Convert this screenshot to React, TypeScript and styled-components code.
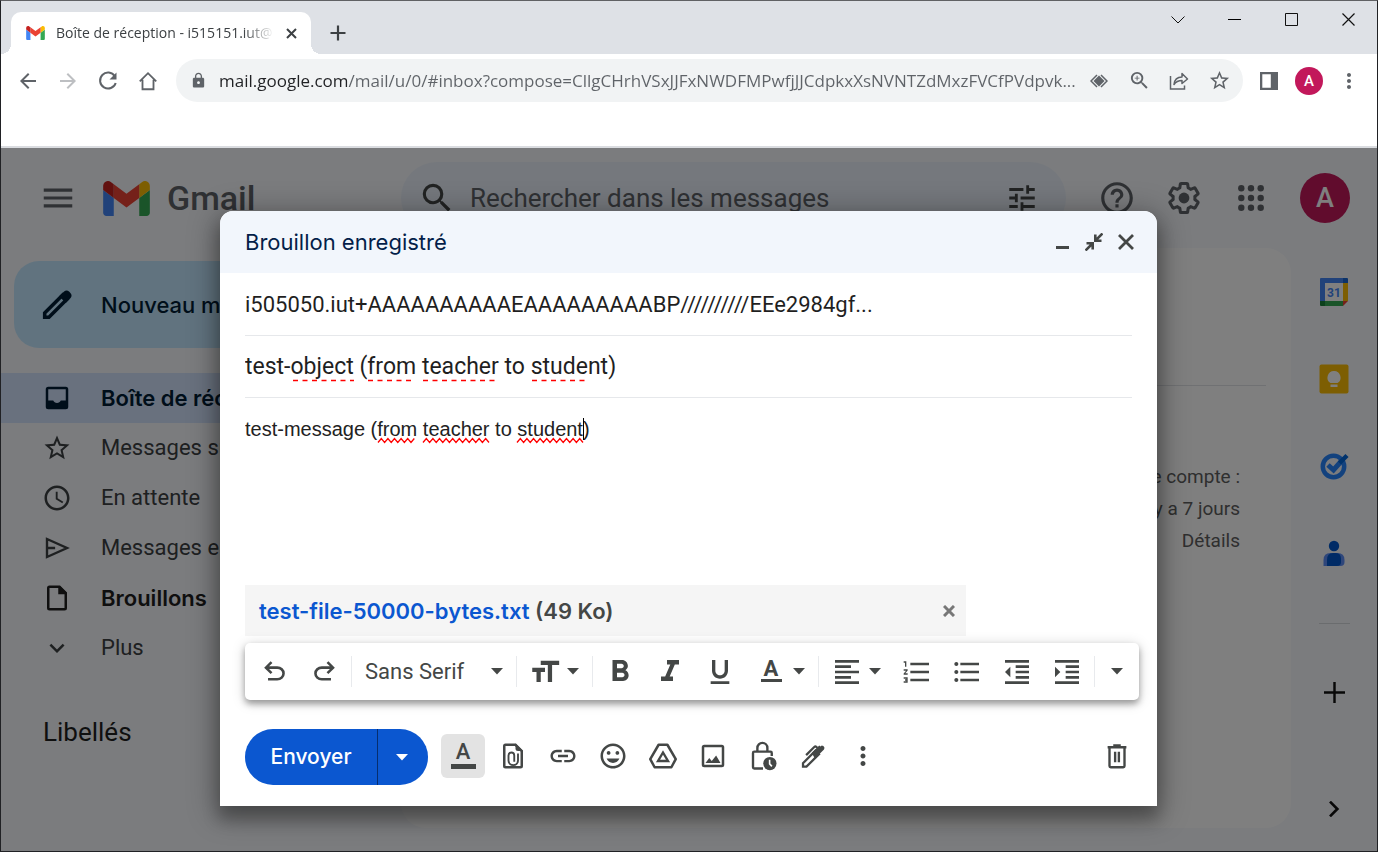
import React from 'react';
import styled, { createGlobalStyle } from 'styled-components';
import {
  MdMenu, MdSearch, MdTune, MdHelpOutline, MdStarBorder, MdSchedule, MdExpandMore,
  MdFormatBold, MdFormatItalic, MdFormatUnderlined, MdFormatAlignLeft, MdFormatListNumbered,
  MdFormatListBulleted, MdFormatIndentDecrease, MdFormatIndentIncrease, MdFormatSize, MdLink,
  MdOutlineInsertEmoticon, MdMoreVert, MdLock, MdArrowBack, MdArrowForward, MdOutlineZoomIn,
} from 'react-icons/md';

const sans = '"Roboto", "Liberation Sans", sans-serif';
const display = '"Inter", "Roboto", sans-serif';
const ui = '"Open Sans", "Noto Sans", sans-serif';

const GlobalStyle = createGlobalStyle`
  *, *::before, *::after { box-sizing: border-box; }
  body { margin: 0; font-family: ${sans}; }
  button, input, textarea, select { font: inherit; color: inherit; margin: 0; padding: 0; border: 0; background: none; outline: none; }
  button { cursor: pointer; }
  svg { display: block; flex: none; }
`;

const Window = styled.div`
  display: flex;
  flex-direction: column;
  min-height: 100vh;
  border: 1px solid #202124;
  border-top-color: #606164;
  background: #fff;
`;

/* ---------- browser chrome ---------- */
const TabStrip = styled.div`
  display: flex;
  align-items: flex-end;
  height: 53px;
  padding-left: 10px;
  background: #dee1e6;
`;
const Tab = styled.div`
  position: relative;
  display: flex;
  align-items: center;
  width: 300px;
  height: 42px;
  padding: 0 11px 0 15px;
  background: #fff;
  border-radius: 10px 10px 0 0;
  font: 14px/20px ${ui};
  color: #3c4043;
  &::before, &::after {
    content: '';
    position: absolute;
    bottom: 0;
    width: 10px;
    height: 10px;
  }
  &::before { right: 100%; background: radial-gradient(circle at 0 0, transparent 10px, #fff 10px); }
  &::after { left: 100%; background: radial-gradient(circle at 100% 0, transparent 10px, #fff 10px); }
`;
const TabTitle = styled.span`
  flex: 1;
  margin: 0 8px 0 11px;
  white-space: nowrap;
  mask-image: linear-gradient(to right, #000 86%, transparent 100%);
`;
const SmallButton = styled.button`
  display: grid;
  place-items: center;
  flex: none;
  width: 18px;
  height: 20px;
  color: #3c4043;
`;
const NewTab = styled.button`
  display: grid;
  place-items: center;
  width: 40px;
  height: 42px;
  margin-left: 7px;
  color: #3c4043;
`;
const WindowButtons = styled.div`
  display: flex;
  align-self: flex-start;
  margin-left: auto;
`;
const WindowButton = styled.button`
  display: grid;
  place-items: center;
  width: 57px;
  height: 37px;
  color: #111;
`;
const Toolbar = styled.div`
  display: flex;
  align-items: center;
  height: 53px;
  padding: 0 8px 0 7px;
`;
const ToolButton = styled.button<{ $dim?: boolean }>`
  display: grid;
  place-items: center;
  flex: none;
  width: 40px;
  height: 40px;
  color: ${p => (p.$dim ? '#bdbfc2' : '#5f6368')};
`;
const Omnibox = styled.div`
  display: flex;
  align-items: center;
  flex: 1;
  min-width: 0;
  height: 43px;
  margin: 0 6px 0 8px;
  padding: 0 4px 0 14px;
  border-radius: 22px;
  background: #f1f3f4;
  color: #5f6368;
`;
const Address = styled.input`
  flex: 1;
  min-width: 0;
  height: 30px;
  margin-left: 12px;
  font: 17px/30px ${ui};
  color: #5f6368;
  background: linear-gradient(to right, #202124 128px, #5f6368 128px);
  background-clip: text;
  -webkit-background-clip: text;
  -webkit-text-fill-color: transparent;
`;
const Avatar = styled.span<{ $size: number; $font: number }>`
  display: grid;
  place-items: center;
  width: ${p => p.$size}px;
  height: ${p => p.$size}px;
  border-radius: 50%;
  background: #c2185b;
  color: #fff;
  font-size: ${p => p.$font}px;
  font-weight: 500;
`;
const BookmarksBar = styled.div`
  height: 41px;
  border-bottom: 2px solid #dadce0;
`;

/* ---------- mail page ---------- */
const Page = styled.div`
  position: relative;
  display: flex;
  flex: 1;
  flex-direction: column;
  background: #f6f8fc;
  color: #444746;
`;
const Header = styled.header`
  display: flex;
  align-items: center;
  height: 100px;
`;
const Brand = styled.div`
  display: flex;
  align-items: center;
  width: 400px;
  padding-left: 38px;
`;
const BrandLink = styled.a`
  display: flex;
  align-items: center;
  gap: 17px;
  margin-left: 26px;
  font: 500 34px/40px ${sans};
  color: #5f6368;
  text-decoration: none;
`;
const HeaderIcon = styled.button<{ $w: number }>`
  display: grid;
  place-items: center;
  width: ${p => p.$w}px;
  height: 60px;
  color: #5f6368;
`;
const SearchBox = styled.div`
  display: flex;
  align-items: center;
  flex: 1;
  height: 72px;
  padding: 0 27px 0 17px;
  border-radius: 36px;
  background: #eaf1fb;
`;
const SearchInput = styled.input`
  flex: 1;
  min-width: 0;
  margin-left: 14px;
  font-size: 26px;
  line-height: 36px;
  &::placeholder { color: #5f6368; opacity: 1; }
`;
const HeaderTools = styled.div`
  display: flex;
  align-items: center;
  width: 311px;
  padding-left: 17px;
`;
const Account = styled.button`
  margin-left: 16px;
`;
const Columns = styled.div`
  display: flex;
  flex: 1;
`;
const Sidebar = styled.nav`
  width: 400px;
  padding-top: 13px;
  font-size: 22px;
  line-height: 28px;
`;
const ComposeButton = styled.button`
  display: flex;
  align-items: center;
  width: 300px;
  height: 87px;
  margin: 0 0 25px 13px;
  padding-left: 26px;
  gap: 27px;
  border-radius: 25px;
  background: #c2e7ff;
  color: #001d35;
  font: 500 22px/28px ${display};
`;
const NavItem = styled.a<{ $active?: boolean; $strong?: boolean }>`
  display: flex;
  align-items: center;
  height: 50px;
  width: 375px;
  padding-left: 41px;
  gap: 29px;
  border-radius: 0 25px 25px 0;
  text-decoration: none;
  background: ${p => (p.$active ? '#d3e3fd' : 'transparent')};
  color: ${p => (p.$active ? '#001d35' : p.$strong ? '#1f1f1f' : '#3c4043')};
  font: ${p => (p.$active || p.$strong ? `600 22px/28px ${display}` : `22px/28px ${sans}`)};
`;
const Labels = styled.h2`
  margin: 42px 0 0 42px;
  font: 26px/34px ${sans};
  color: #1f1f1f;
`;
const Panel = styled.main`
  flex: 1;
  margin-bottom: 23px;
  padding: 137px 25px 0;
  border-radius: 25px;
  background: #fff;
`;
const Activity = styled.footer`
  padding: 75px 26px 0 0;
  border-top: 1px solid #e0e2e6;
  text-align: right;
  font-size: 19px;
  line-height: 32px;
  color: #5e5e5e;
`;
const Line = styled.div``;
const Rail = styled.aside`
  display: flex;
  flex-direction: column;
  align-items: center;
  width: 86px;
  padding-bottom: 22px;
  color: #111;
`;
const RailButton = styled.button`
  display: grid;
  place-items: center;
  width: 61px;
  height: 87px;
`;
const RailRule = styled.hr`
  width: 31px;
  height: 1px;
  margin: 27px 0 25px;
  border: 0;
  background: #d5d8dd;
`;
const RailEnd = styled(RailButton)`
  height: 40px;
  margin-top: auto;
`;

/* ---------- compose dialog ---------- */
const Scrim = styled.div`
  position: absolute;
  inset: 0;
  display: flex;
  padding: 63px 220px 45px 219px;
  background: rgba(0, 0, 0, 0.5);
`;
const Dialog = styled.section`
  display: flex;
  flex: 1;
  flex-direction: column;
  min-width: 0;
  border-radius: 13px 13px 0 0;
  background: #fff;
  color: #444746;
  font-size: 22px;
  line-height: 28px;
  box-shadow: 0 12px 16px 2px rgba(0, 0, 0, 0.24), 0 5px 30px 4px rgba(0, 0, 0, 0.3);
`;
const DialogHeader = styled.header`
  display: flex;
  align-items: center;
  height: 62px;
  padding: 0 15px 0 25px;
  border-radius: 13px 13px 0 0;
  background: #f2f6fc;
`;
const DialogTitle = styled.h1`
  flex: 1;
  margin: 0;
  font: 400 22px/28px ${display};
  color: #041e49;
`;
const HeaderButton = styled.button`
  display: grid;
  place-items: center;
  width: 32px;
  height: 32px;
`;
const Fields = styled.div`
  display: flex;
  flex: 1;
  flex-direction: column;
  padding: 1px 25px 0;
  color: #1f1f1f;
`;
const Field = styled.label`
  position: relative;
  display: block;
  height: 62px;
  border-bottom: 1px solid #e6e8eb;
`;
const FieldInput = styled.input<{ $large?: boolean }>`
  width: 100%;
  height: 61px;
  font-size: ${p => (p.$large ? 23 : 22)}px;
`;
const MessageField = styled.label`
  position: relative;
  display: flex;
  flex: 1;
`;
const MessageInput = styled.textarea`
  flex: 1;
  padding-top: 18px;
  resize: none;
  font: 20px/26px "Liberation Sans", sans-serif;
  color: #222;
`;
const Marks = styled.svg`
  position: absolute;
  left: 0;
  top: 0;
  pointer-events: none;
`;
const Attachment = styled.div`
  display: flex;
  align-items: center;
  justify-content: space-between;
  height: 51px;
  margin: 0 191px 7px 25px;
  padding: 0 8px 0 14px;
  background: #f5f5f5;
  font: 600 22px/28px ${display};
`;
const FileLink = styled.a`
  color: #0b57d0;
  text-decoration: none;
`;
const FormatBar = styled.div`
  display: flex;
  align-items: center;
  height: 57px;
  margin: 0 18px 0 25px;
  padding: 0 2px 0 4px;
  border-radius: 5px;
  background: #fff;
  box-shadow: 0 4px 6px rgba(0, 0, 0, 0.32), 0 2px 14px rgba(0, 0, 0, 0.18);
`;
const FormatButton = styled.button<{ $w?: number }>`
  display: grid;
  place-items: center;
  flex: none;
  width: ${p => p.$w ?? 50}px;
  height: 46px;
`;
const FormatMenu = styled.button`
  display: flex;
  align-items: center;
  flex: none;
  width: 71px;
  height: 46px;
`;
const MenuIcon = styled.span`
  display: grid;
  place-items: center;
  width: 34px;
  margin: 0 5px 0 9px;
`;
const Divider = styled.span`
  flex: none;
  width: 1px;
  height: 31px;
  margin: 0 2px;
  background: #e8eaed;
`;
const FontPicker = styled.label`
  display: flex;
  align-items: center;
  flex: 1;
  padding: 0 11px;
`;
const FontSelect = styled.select`
  flex: 1;
  appearance: none;
  line-height: 28px;
`;
const Letter = styled.span<{ $w: number; $bar: number; $weight: number }>`
  width: ${p => p.$w}px;
  padding-bottom: ${p => p.$bar - 1}px;
  border-bottom: ${p => p.$bar}px solid currentColor;
  font: ${p => p.$weight} 22px/16px ${sans};
  text-align: center;
`;
const Actions = styled.div`
  display: flex;
  align-items: center;
  height: 56px;
  margin: 29px 12px 21px 25px;
`;
const SendGroup = styled.div`
  display: flex;
  height: 56px;
  margin-right: 13px;
  overflow: hidden;
  border-radius: 28px;
  background: #0b57d0;
  color: #fff;
`;
const SendButton = styled.button`
  width: 133px;
  border-right: 1px solid #062e6f;
  font: 500 21px/28px ${display};
`;
const SendMenu = styled.button`
  display: grid;
  place-items: center;
  width: 50px;
  padding-right: 3px;
`;
const ActionButton = styled.button<{ $on?: boolean }>`
  display: grid;
  place-items: center;
  flex: none;
  width: 44px;
  height: 44px;
  margin: 0 6px 2px 0;
  border-radius: 6px;
  background: ${p => (p.$on ? '#e3e3e3' : 'transparent')};
`;
const Spacer = styled.span`
  flex: 1;
`;

/* ---------- drawings ---------- */
type IconProps = { size?: number; children: React.ReactNode; w?: number };
const Stroke = ({ size = 30, w = 2, children }: IconProps) => (
  <svg width={size} height={size} viewBox="0 0 24 24" fill="none" stroke="currentColor" strokeWidth={w}>{children}</svg>
);
const Fill = ({ size = 30, children }: IconProps) => (
  <svg width={size} height={size} viewBox="0 0 24 24" fill="currentColor">{children}</svg>
);
const Caret = () => (
  <svg width="12" height="7" viewBox="0 0 12 7" fill="currentColor"><path d="M0 0h12L6 6.5z" /></svg>
);
const GmailLogo = ({ width, height }: { width: number; height: number }) => (
  <svg width={width} height={height} viewBox="52 42 88 66">
    <path fill="#4285f4" d="M58 108h14V74L52 59v43c0 3.32 2.69 6 6 6" />
    <path fill="#34a853" d="M120 108h14c3.32 0 6-2.69 6-6V59l-20 15" />
    <path fill="#fbbc04" d="M120 48v26l20-15v-8c0-7.42-8.47-11.65-14.4-7.2" />
    <path fill="#ea4335" d="M72 74V48l24 18 24-18v26L96 92" />
    <path fill="#c5221f" d="M52 51v8l20 15V48l-5.6-4.2c-5.94-4.45-14.4-.22-14.4 7.2" />
  </svg>
);
const Gear = () => (
  <svg width="38" height="38" viewBox="0 0 24 24">
    <path transform="translate(.96 .96) scale(.92)" fill="none" stroke="currentColor" strokeWidth="2.1" strokeLinejoin="round" d="M19.43 12.98c.04-.32.07-.64.07-.98 0-.34-.03-.66-.07-.98l2.11-1.65c.19-.15.24-.42.12-.64l-2-3.46c-.09-.16-.26-.25-.44-.25-.06 0-.12.01-.17.03l-2.49 1c-.52-.4-1.08-.73-1.69-.98l-.38-2.65C14.46 2.18 14.25 2 14 2h-4c-.25 0-.46.18-.49.42l-.38 2.65c-.61.25-1.17.59-1.69.98l-2.49-1c-.06-.02-.12-.03-.18-.03-.17 0-.34.09-.43.25l-2 3.46c-.13.22-.07.49.12.64l2.11 1.65c-.04.32-.07.65-.07.98 0 .33.03.66.07.98l-2.11 1.65c-.19.15-.24.42-.12.64l2 3.46c.09.16.26.25.44.25.06 0 .12-.01.17-.03l2.49-1c.52.4 1.08.73 1.69.98l.38 2.65c.03.24.24.42.49.42h4c.25 0 .46-.18.49-.42l.38-2.65c.61-.25 1.17-.59 1.69-.98l2.49 1c.06.02.12.03.18.03.17 0 .34-.09.43-.25l2-3.46c.12-.22.07-.49-.12-.64l-2.11-1.65z" />
    <circle cx="12" cy="12" r="3.4" fill="currentColor" />
  </svg>
);
const AppsGrid = () => (
  <svg width="26" height="26" viewBox="0 0 26 26" fill="currentColor">
    {[3.3, 13, 22.7].map(y => [3.3, 13, 22.7].map(x => <circle key={`${x}-${y}`} cx={x} cy={y} r="3.2" />))}
  </svg>
);
const Undo = ({ flip }: { flip?: boolean }) => (
  <Fill size={31}>
    <path transform={flip ? 'translate(24 0) scale(-1 1)' : undefined} d="M7 19v-2h7.1q1.575 0 2.738-1T18 13.5t-1.163-2.5-2.737-1H7.8l2.6 2.6L9 14 4 9l5-5 1.4 1.4L7.8 8h6.3q2.425 0 4.163 1.575T20 13.5t-1.738 3.925T14.1 19z" />
  </Fill>
);

const squiggle = (from: number, to: number) => {
  let d = `M${from} 442.5`;
  for (let x = from, up = true; x < to; x += 3.3, up = !up) d += `l3.3 ${up ? -4 : 4}`;
  return d;
};

const url = 'mail.google.com/mail/u/0/#inbox?compose=CllgCHrhVSxJJFxNWDFMPwfjJJCdpkxXsNVNTZdMxzFVCfPVdpvk...';

export default function App() {
  return (
    <Window>
      <GlobalStyle />
      <TabStrip>
        <Tab>
          <GmailLogo width={19} height={14} />
          <TabTitle>Boîte de réception - i515151.iut@</TabTitle>
          <SmallButton aria-label="Fermer l'onglet">
            <svg width="11" height="11" viewBox="0 0 11 11" stroke="currentColor" strokeWidth="2"><path d="M1 1l9 9M10 1l-9 9" /></svg>
          </SmallButton>
        </Tab>
        <NewTab aria-label="Nouvel onglet">
          <svg width="16" height="16" viewBox="0 0 16 16" stroke="currentColor" strokeWidth="2.200"><path d="M8 .5v15M.5 8h15" /></svg>
        </NewTab>
        <WindowButtons>
          <WindowButton aria-label="Rechercher des onglets">
            <svg width="14" height="8" viewBox="0 0 14 8" fill="none" stroke="currentColor"><path d="M.5 .5L7 7l6.500-6.500" /></svg>
          </WindowButton>
          <WindowButton aria-label="Réduire">
            <svg width="13" height="1" viewBox="0 0 13 1"><path d="M0 0h13v1H0z" /></svg>
          </WindowButton>
          <WindowButton aria-label="Agrandir">
            <svg width="13" height="13" viewBox="0 0 13 13" fill="none" stroke="currentColor"><path d="M.5 .5h12v12H.5z" /></svg>
          </WindowButton>
          <WindowButton aria-label="Fermer">
            <svg width="13" height="13" viewBox="0 0 13 13" stroke="currentColor" strokeWidth="1.200"><path d="M.5 .5l12 12M12.500 .5l-12 12" /></svg>
          </WindowButton>
        </WindowButtons>
      </TabStrip>
      <Toolbar>
        <ToolButton aria-label="Retour"><MdArrowBack size={24} /></ToolButton>
        <ToolButton aria-label="Avancer" $dim><MdArrowForward size={24} /></ToolButton>
        <ToolButton aria-label="Actualiser">
          <Stroke size={24}><path d="M18.800 7.200A8 8 0 1 0 19.700 14" /><path fill="currentColor" stroke="none" d="M20.500 3.500v7h-7z" /></Stroke>
        </ToolButton>
        <ToolButton aria-label="Accueil">
          <Stroke size={22}><path d="M3 12.500L12 3.500l9 9M6 10.500V21h12V10.500" /></Stroke>
        </ToolButton>
        <Omnibox>
          <MdLock size={17} />
          <Address aria-label="Adresse" defaultValue={url} />
          <ToolButton aria-label="Site">
            <svg width="18" height="14" viewBox="0 0 18 14" fill="none" stroke="currentColor" strokeWidth="1.500">
              <path d="M7 1L1 7l6 6M11 1l6 6-6 6" /><path fill="currentColor" stroke="none" d="M9 1.500l5.500 5.500L9 12.500 3.500 7z" />
            </svg>
          </ToolButton>
          <ToolButton aria-label="Zoom"><MdOutlineZoomIn size={23} /></ToolButton>
          <ToolButton aria-label="Partager">
            <svg width="20" height="20" viewBox="0 0 20 20" fill="none" stroke="currentColor" strokeWidth="1.500">
              <path d="M1.500 5v13h14v-3.500" /><path strokeLinejoin="round" d="M5 13.500c.5-5 3.500-7.500 8-7.500V2.500L18.500 8 13 12.500V9.500c-4 0-6 1-8 4z" />
            </svg>
          </ToolButton>
          <ToolButton aria-label="Favoris"><MdStarBorder size={23} /></ToolButton>
        </Omnibox>
        <ToolButton aria-label="Panneau latéral">
          <svg width="18" height="18" viewBox="0 0 18 18"><path fill="#5f6368" fillRule="evenodd" d="M0 0h18v18H0zM2.300 2.300v13.400h8.500V2.300z" /></svg>
        </ToolButton>
        <ToolButton aria-label="Profil"><Avatar $size={28} $font={15}>A</Avatar></ToolButton>
        <ToolButton aria-label="Menu"><MdMoreVert size={24} /></ToolButton>
      </Toolbar>
      <BookmarksBar />

      <Page>
        <Header>
          <Brand>
            <HeaderIcon $w={38} aria-label="Menu principal"><MdMenu size={38} /></HeaderIcon>
            <BrandLink href="#inbox"><GmailLogo width={47} height={35} />Gmail</BrandLink>
          </Brand>
          <SearchBox>
            <MdSearch size={38} />
            <SearchInput aria-label="Rechercher" placeholder="Rechercher dans les messages" />
            <MdTune size={34} />
          </SearchBox>
          <HeaderTools>
            <HeaderIcon $w={67} aria-label="Aide"><MdHelpOutline size={38} /></HeaderIcon>
            <HeaderIcon $w={67} aria-label="Paramètres"><Gear /></HeaderIcon>
            <HeaderIcon $w={67} aria-label="Applications"><AppsGrid /></HeaderIcon>
            <Account aria-label="Compte"><Avatar $size={50} $font={27}>A</Avatar></Account>
          </HeaderTools>
        </Header>
        <Columns>
          <Sidebar>
            <ComposeButton>
              <Stroke size={34}>
                <path strokeWidth="2.500" d="M3.300 20.700v-3L16 5l3 3L6.300 20.700z" />
                <path fill="currentColor" stroke="none" d="M13.500 5.800L17 2.400q1.900-1.500 3.700.3l.6.600q1.800 1.800.3 3.700l-3.400 3.500z" />
              </Stroke>
              Nouveau message
            </ComposeButton>
            <NavItem href="#inbox" $active>
              <Fill><path fillRule="evenodd" d="M5 3h14a2 2 0 0 1 2 2v14a2 2 0 0 1-2 2H5a2 2 0 0 1-2-2V5a2 2 0 0 1 2-2zm0 2v9h4c.5 1.200 1.600 2 3 2s2.500-.8 3-2h4V5z" /></Fill>
              Boîte de réception
            </NavItem>
            <NavItem href="#starred"><MdStarBorder size={30} />Messages suivis</NavItem>
            <NavItem href="#snoozed"><MdSchedule size={30} />En attente</NavItem>
            <NavItem href="#sent"><Stroke><path strokeWidth="1.900" d="M4 4.800L20 12 4 19.200zM4 12h6.500" /></Stroke>Messages envoyés</NavItem>
            <NavItem href="#drafts" $strong>
              <Stroke><path d="M14 3H6a1 1 0 0 0-1 1v16a1 1 0 0 0 1 1h12a1 1 0 0 0 1-1V8z" /><path fill="currentColor" stroke="none" d="M13 2.500h1.500L20 8v1h-7z" /></Stroke>
              Brouillons
            </NavItem>
            <NavItem href="#more"><MdExpandMore size={30} />Plus</NavItem>
            <Labels>Libellés</Labels>
          </Sidebar>
          <Panel>
            <Activity>
              <Line>Dernière activité sur le compte :</Line>
              <Line>il y a 7 jours</Line>
              <Line>Détails</Line>
            </Activity>
          </Panel>
          <Rail>
            <RailButton aria-label="Agenda">
              <svg width="30" height="30" viewBox="0 0 30 30">
                <path fill="#fff" d="M6 6h18v18H6z" />
                <path fill="#4285f4" d="M2 1h22v5H6v18H1V2q0-1 1-1z" />
                <path fill="#1967d2" d="M24 1h4q1 0 1 1v5h-5z" />
                <path fill="#fbbc04" d="M24 6h5v18h-5z" />
                <path fill="#34a853" d="M6 24h18v5H6z" />
                <path fill="#188038" d="M1 24h5v5H2q-1 0-1-1z" />
                <path fill="#ea4335" d="M24 24h5l-5 5z" />
                <text x="15" y="19.500" textAnchor="middle" fontFamily="Roboto, sans-serif" fontWeight="700" fontSize="12" fill="#4285f4">31</text>
              </svg>
            </RailButton>
            <RailButton aria-label="Keep">
              <svg width="30" height="30" viewBox="0 0 30 30">
                <rect width="29" height="29" x=".5" y=".5" rx="2" fill="#fbbc04" />
                <path fill="#fff" d="M15 7a6.500 6.500 0 0 0-3.500 12h7A6.500 6.500 0 0 0 15 7zM11.500 20.500h7v2.500h-7z" />
              </svg>
            </RailButton>
            <RailButton aria-label="Tasks">
              <svg width="30" height="30" viewBox="0 0 30 30" fill="none">
                <circle cx="14.500" cy="15.500" r="10.700" stroke="#2684fc" strokeWidth="4.500" />
                <path stroke="#2684fc" strokeWidth="5" d="M9 14l5.500 5L22 10.500" />
                <path stroke="#0066da" strokeWidth="4.500" d="M20.500 12L28 4.500" />
              </svg>
            </RailButton>
            <RailButton aria-label="Contacts">
              <svg width="30" height="30" viewBox="0 0 30 30">
                <circle cx="15" cy="8" r="5.200" fill="#0057cc" />
                <path fill="#5c8df6" d="M4.500 28v-6q0-7 7-7h7q7 0 7 7v2q0 4-4 4z" />
                <path fill="#0057cc" d="M8 28v-6q0-7 6-7h3q5 0 5 6v3q0 4-4 4z" />
              </svg>
            </RailButton>
            <RailRule />
            <RailButton aria-label="Modules complémentaires"><Stroke size={21} w={2.8}><path d="M12 0v24M0 12h24" /></Stroke></RailButton>
            <RailEnd aria-label="Masquer le panneau"><Stroke size={16} w={4}><path d="M6 1l11 11L6 23" /></Stroke></RailEnd>
          </Rail>
        </Columns>

        <Scrim>
          <Dialog role="dialog" aria-labelledby="draft-title">
            <DialogHeader>
              <DialogTitle id="draft-title">Brouillon enregistré</DialogTitle>
              <HeaderButton aria-label="Réduire"><svg width="13" height="14" viewBox="0 0 13 14" fill="currentColor"><path d="M0 11h13v3H0z" /></svg></HeaderButton>
              <HeaderButton aria-label="Quitter le plein écran">
                <svg width="18" height="18" viewBox="0 0 18 18" fill="none" stroke="currentColor" strokeWidth="2.600">
                  <path d="M17.500 .5l-6.500 6.500M10.300 1.500v6.200h6.200M.5 17.500L7 11M1.500 10.300h6.200v6.200" />
                </svg>
              </HeaderButton>
              <HeaderButton aria-label="Fermer"><svg width="16" height="16" viewBox="0 0 16 16" stroke="currentColor" strokeWidth="2.800"><path d="M1 1l14 14M15 1L1 15" /></svg></HeaderButton>
            </DialogHeader>
            <Fields>
              <Field>
                <FieldInput aria-label="À" defaultValue="i505050.iut+AAAAAAAAAAEAAAAAAAAABP//////////EEe2984gf..." />
              </Field>
              <Field>
                <FieldInput $large aria-label="Objet" spellCheck={false} defaultValue="test-object (from teacher to student)" />
                <Marks width="400" height="61" viewBox="245 336 400 61" stroke="#f00" strokeWidth="1.300" strokeDasharray="5 4.500">
                  <path d="M293 380.500h61M368 380.500h47M423 380.500h73M532 380.500h53" />
                </Marks>
              </Field>
              <MessageField>
                <MessageInput aria-label="Message" spellCheck={false} defaultValue="test-message (from teacher to student)" />
                <Marks width="400" height="61" viewBox="245 398 400 61" fill="none" stroke="#f00" strokeWidth="1.300">
                  <path d={squiggle(378, 414)} /><path d={squiggle(423, 487)} /><path d={squiggle(517, 580)} />
                  <path stroke="#000" strokeWidth="1" d="M583.500 418v22" />
                </Marks>
              </MessageField>
            </Fields>
            <Attachment>
              <span><FileLink href="#file">test-file-50000-bytes.txt</FileLink> (49 Ko)</span>
              <SmallButton aria-label="Supprimer la pièce jointe">
                <svg width="12" height="12" viewBox="0 0 12 12" stroke="#777" strokeWidth="3"><path d="M1 1l10 10M11 1L1 11" /></svg>
              </SmallButton>
            </Attachment>
            <FormatBar role="toolbar" aria-label="Mise en forme">
              <FormatButton aria-label="Annuler"><Undo /></FormatButton>
              <FormatButton aria-label="Rétablir"><Undo flip /></FormatButton>
              <Divider />
              <FontPicker>
                <FontSelect aria-label="Police" defaultValue="Sans Serif"><option>Sans Serif</option></FontSelect>
                <Caret />
              </FontPicker>
              <Divider />
              <FormatMenu aria-label="Taille"><MenuIcon><MdFormatSize size={34} /></MenuIcon><Caret /></FormatMenu>
              <Divider />
              <FormatButton aria-label="Gras"><MdFormatBold size={36} /></FormatButton>
              <FormatButton aria-label="Italique"><MdFormatItalic size={36} /></FormatButton>
              <FormatButton aria-label="Souligné"><MdFormatUnderlined size={32} /></FormatButton>
              <FormatMenu aria-label="Couleur du texte"><MenuIcon><Letter $w={21} $bar={3} $weight={700}>A</Letter></MenuIcon><Caret /></FormatMenu>
              <Divider />
              <FormatMenu aria-label="Alignement"><MenuIcon><MdFormatAlignLeft size={32} /></MenuIcon><Caret /></FormatMenu>
              <FormatButton aria-label="Liste numérotée"><MdFormatListNumbered size={32} /></FormatButton>
              <FormatButton aria-label="Liste à puces"><MdFormatListBulleted size={32} /></FormatButton>
              <FormatButton aria-label="Diminuer le retrait"><MdFormatIndentDecrease size={32} /></FormatButton>
              <FormatButton aria-label="Augmenter le retrait"><MdFormatIndentIncrease size={32} /></FormatButton>
              <Divider />
              <FormatButton $w={40} aria-label="Plus d'options"><Caret /></FormatButton>
            </FormatBar>
            <Actions>
              <SendGroup>
                <SendButton>Envoyer</SendButton>
                <SendMenu aria-label="Options d'envoi"><Caret /></SendMenu>
              </SendGroup>
              <ActionButton $on aria-label="Options de mise en forme"><Letter $w={25} $bar={5} $weight={500}>A</Letter></ActionButton>
              <ActionButton aria-label="Joindre des fichiers">
                <Stroke><path d="M14 3H6a1 1 0 0 0-1 1v16a1 1 0 0 0 1 1h12a1 1 0 0 0 1-1V8z" /><path fill="currentColor" stroke="none" d="M14 2l6 6h-4q-2 0-2-2z" /><path strokeWidth="1.500" d="M16 10v5.500a3.800 3.800 0 0 1-7.600 0V11.500a2.300 2.300 0 0 1 4.600 0v5" /></Stroke>
              </ActionButton>
              <ActionButton aria-label="Insérer un lien"><MdLink size={30} /></ActionButton>
              <ActionButton aria-label="Insérer un emoji"><MdOutlineInsertEmoticon size={30} /></ActionButton>
              <ActionButton aria-label="Insérer avec Drive">
                <Stroke><path strokeLinejoin="round" d="M8.500 3h7l6.700 11.500-3.500 6.500H5.300l-3.500-6.500z" /><path d="M12 9.200L16 16H8z" strokeWidth="1.900" /></Stroke>
              </ActionButton>
              <ActionButton aria-label="Insérer une photo">
                <Stroke><rect x="4" y="4" width="16" height="16" rx="1" /><path fill="currentColor" stroke="none" d="M6 17.500l3-4 2 2.500 3.500-4.500 3.500 6z" /></Stroke>
              </ActionButton>
              <ActionButton aria-label="Mode confidentiel">
                <Stroke><path d="M12 22H5a1 1 0 0 1-1-1V9.500a1 1 0 0 1 1-1h13a1 1 0 0 1 1 1V12M7.500 8.500V5.500a4 4 0 0 1 8 0v3" strokeWidth="1.900" /><circle cx="17.500" cy="18" r="5.300" fill="currentColor" stroke="none" /><path stroke="#fff" strokeWidth="1.300" d="M17.300 15v3.300l1.800 2" /></Stroke>
              </ActionButton>
              <ActionButton aria-label="Insérer une signature">
                <Stroke>
                  <path strokeWidth="1.800" d="M4 20.500v-2.800L14 7.700l2.800 2.800-10 10zM6.500 11.300L13 4.800q.9-.8 1.800 0l.8.8" />
                  <path fill="currentColor" stroke="none" d="M11 9.500L17 3.500l1 .8 1-.8q1.500 0 2.200 1.800-.2 1.500-1.200 2.200l-6.500 6.500z" />
                </Stroke>
              </ActionButton>
              <ActionButton aria-label="Autres options"><MdMoreVert size={30} /></ActionButton>
              <Spacer />
              <ActionButton aria-label="Supprimer le brouillon">
                <Stroke><path d="M6 5v15a1 1 0 0 0 1 1h10a1 1 0 0 0 1-1V5M4.500 5h15M9 3.500h6M10.500 8.500v8.500M13.500 8.500v8.500" strokeWidth="1.900" /></Stroke>
              </ActionButton>
            </Actions>
          </Dialog>
        </Scrim>
      </Page>
    </Window>
  );
}
